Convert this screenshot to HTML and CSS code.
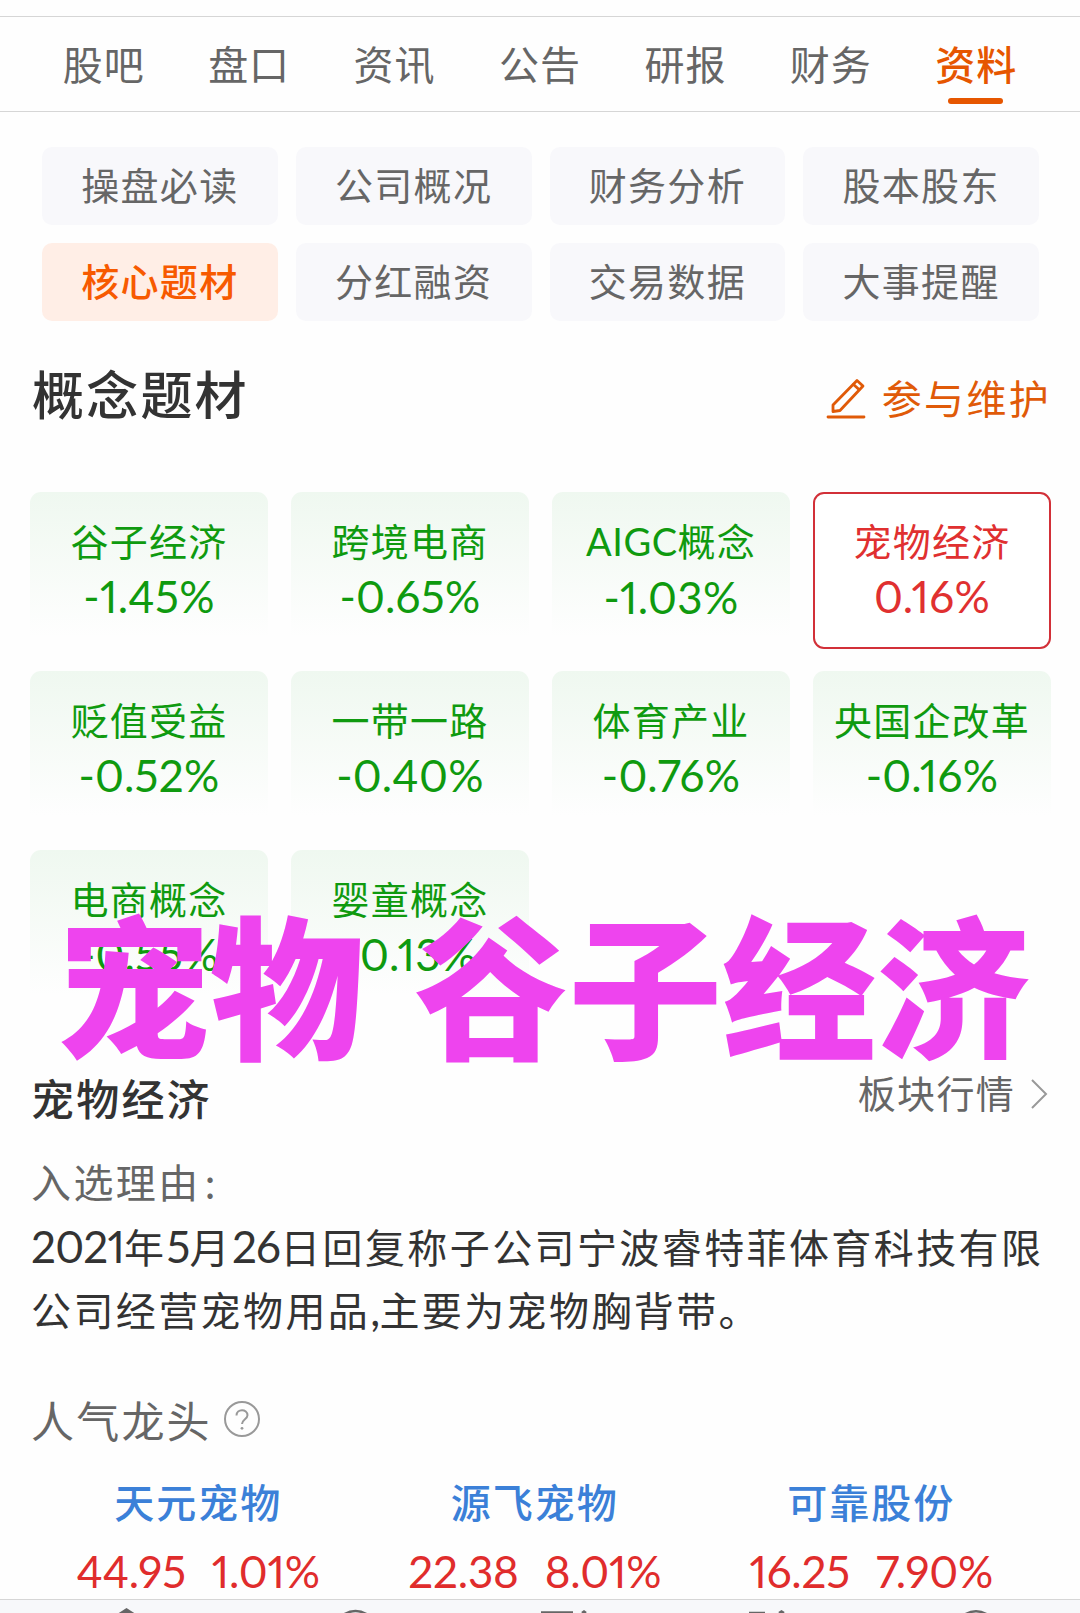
FILE: index.html
```html
<!DOCTYPE html>
<html lang="zh-CN">
<head>
    <meta charset="UTF-8">
    <title>核心题材</title>
    <link rel="stylesheet" href="styles.css">
</head>
<body>

<nav class="tabs">
    <a>股吧</a>
    <a>盘口</a>
    <a>资讯</a>
    <a>公告</a>
    <a>研报</a>
    <a>财务</a>
    <a class="active">资料</a>
</nav>

<div class="chips">
    <a>操盘必读</a>
    <a>公司概况</a>
    <a>财务分析</a>
    <a>股本股东</a>
    <a class="active">核心题材</a>
    <a>分红融资</a>
    <a>交易数据</a>
    <a>大事提醒</a>
</div>

<section class="concepts">
    <header class="head">
        <h1>概念题材</h1>
        <a class="edit">
            <svg width="40" height="42" viewBox="0 0 40 42" fill="none" stroke="currentColor" stroke-width="2.8" stroke-linejoin="round" stroke-linecap="round">
                <path d="M7 27L31 2.5L37 8L14 32.5L7 33.5Z"/>
                <path d="M27.5 6.5L33 11.5"/>
                <path d="M2 39H38"/>
            </svg>
            <span>参与维护</span>
        </a>
    </header>

    <div class="cards">
        <div class="card"><p>谷子经济</p><b>-1.45%</b></div>
        <div class="card"><p>跨境电商</p><b>-0.65%</b></div>
        <div class="card"><p><i>AIGC</i>概念</p><b>-1.03%</b></div>
        <div class="card selected"><p>宠物经济</p><b>0.16%</b></div>
        <div class="card"><p>贬值受益</p><b>-0.52%</b></div>
        <div class="card"><p>一带一路</p><b>-0.40%</b></div>
        <div class="card"><p>体育产业</p><b>-0.76%</b></div>
        <div class="card"><p>央国企改革</p><b>-0.16%</b></div>
        <div class="card"><p>电商概念</p><b>-0.55%</b></div>
        <div class="card"><p>婴童概念</p><b>-0.13%</b></div>
    </div>

    <div class="caption">宠物 谷子经济</div>
</section>

<section class="detail">
    <header class="head">
        <h2>宠物经济</h2>
        <a class="more">
            <span>板块行情</span>
            <svg width="17" height="30" viewBox="0 0 17 30" fill="none" stroke="#999" stroke-width="2">
                <path d="M1 1L15 15L1 29"/>
            </svg>
        </a>
    </header>

    <p class="label">入选理由<span class="colon">:</span></p>
    <p class="reason"><i>2021</i>年<i>5</i>月<i>26</i>日回复称子公司宁波睿特菲体育科技有限<br>公司经营宠物用品<i>,</i>主要为宠物胸背带。</p>

    <h3>人气龙头
        <svg width="38" height="38" viewBox="0 0 38 38" fill="none" stroke="#999" stroke-width="2">
            <circle cx="19" cy="19" r="17"/>
            <path d="M13.5 15.5C13.5 8.5 24.5 8.5 24.5 15.3C24.5 19 19 19.5 19 24"/>
            <circle cx="19" cy="28.3" r="1.4" fill="#999" stroke="none"/>
        </svg>
    </h3>

    <div class="stocks">
        <div class="stock"><p>天元宠物</p><b>44.95</b><b>1.01%</b></div>
        <div class="stock"><p>源飞宠物</p><b>22.38</b><b>8.01%</b></div>
        <div class="stock"><p>可靠股份</p><b>16.25</b><b>7.90%</b></div>
    </div>
</section>

<footer class="toolbar">
    <svg width="1080" height="13" viewBox="0 0 1080 13" fill="none" stroke="#666" stroke-width="2.5">
        <path d="M118 13.5L126.5 8L135 13.5Z" fill="#666" stroke="none"/>
        <path d="M343 15Q355.5 7 368 15"/>
        <path d="M541 12.5H573M582 13L584 11.5L586 13"/>
        <path d="M749 13H765M779 13L781.5 11.5L784 13"/>
        <path d="M964 15Q976 7.5 988 15"/>
    </svg>
</footer>

</body>
</html>
```

FILE: styles.css
```css
body {
    background: #fefefe;
    color: #333;
    font-family: "Noto Sans CJK SC", sans-serif;
    height: 1613px;
    margin: 0;
    overflow: hidden;
    padding-top: 16px;
    box-sizing: border-box;
    display: flex;
    flex-direction: column;
}
h1, h2, h3, p {
    font-weight: normal;
    margin: 0;
}
b, i {
    font-family: Lato, "Noto Sans CJK SC", sans-serif;
    font-style: normal;
    font-variant-numeric: proportional-nums;
    font-weight: normal;
}
svg {
    display: block;
}
.tabs {
    border-bottom: 1px solid #d6d6d6;
    border-top: 1px solid #d6d6d6;
    box-sizing: border-box;
    display: flex;
    flex-shrink: 0;
    height: 96px;
    padding: 0 31px;
}
.tabs a {
    color: #666;
    flex: 1;
    font-size: 40px;
    letter-spacing: 1px;
    line-height: 92px;
    text-align: center;
}
.tabs .active {
    color: #e65600;
    font-weight: 500;
    position: relative;
}
.tabs .active::after {
    background: #e65600;
    border-radius: 3px;
    bottom: 7px;
    content: "";
    height: 6px;
    left: 44px;
    position: absolute;
    width: 55px;
}
.chips {
    display: grid;
    flex-shrink: 0;
    gap: 18px;
    grid-template-columns: repeat(4, 1fr);
    padding: 35px 41px 0 42px;
}
.chips a {
    background: #f8f8fb;
    border-radius: 10px;
    color: #666;
    font-size: 38px;
    height: 78px;
    letter-spacing: 1.3px;
    line-height: 73px;
    text-align: center;
}
.chips .active {
    background: #ffeee6;
    color: #f75a00;
    font-weight: 500;
}
.head {
    align-items: center;
    display: flex;
    justify-content: space-between;
}
.concepts {
    flex-shrink: 0;
    padding: 0 29px 0 30px;
    position: relative;
}
.concepts .head {
    height: 171px;
    padding-left: 2px;
}
h1 {
    font-size: 52px;
    font-weight: 500;
    letter-spacing: 2.2px;
    line-height: 60px;
    margin-bottom: 28px;
}
.edit {
    align-items: center;
    color: #e05a08;
    display: flex;
    font-size: 40px;
    gap: 16px;
    letter-spacing: 2.3px;
    line-height: 50px;
    margin-bottom: 20px;
}
.edit svg {
    margin-top: 4px;
}
.cards {
    display: grid;
    gap: 22px 23px;
    grid-template-columns: repeat(4, 1fr);
}
.card {
    background: linear-gradient(#eff8f0, #fefefe 92%);
    border-radius: 11px;
    box-sizing: border-box;
    color: #0f9a0f;
    height: 157px;
    padding-top: 20px;
    text-align: center;
}
.card p {
    font-size: 38px;
    letter-spacing: 1.2px;
    line-height: 56px;
    white-space: nowrap;
}
.card i {
    letter-spacing: 0.5px;
}
.card b {
    display: block;
    font-size: 44px;
    letter-spacing: 0.3px;
    line-height: 57px;
}
.card.selected {
    background: #fff;
    border: 2px solid #d23038;
    color: #e03030;
    padding-top: 18px;
}
/* caption lies over the last row of cards */
.caption {
    color: #ee44ee;
    font-size: 154px;
    font-weight: 900;
    left: 56px;
    line-height: 154px;
    position: absolute;
    top: 583px;
    white-space: nowrap;
    word-spacing: 15px;
}
.detail {
    box-sizing: border-box;
    flex: 1 1 0;
    min-height: 0;
    padding: 59px 31px 0;
}
.detail .head {
    height: 62px;
}
h2 {
    font-size: 43px;
    font-weight: 500;
    letter-spacing: 2.2px;
}
.more {
    align-items: center;
    color: #666;
    display: flex;
    font-size: 38px;
    gap: 16px;
    letter-spacing: 1.3px;
    margin: 0 1px 11px 0;
}
.more svg {
    margin-top: 4px;
}
.label {
    color: #666;
    font-size: 40px;
    letter-spacing: 2.4px;
    line-height: 60px;
    margin-top: 23px;
}
.colon {
    margin-left: 4px;
}
.reason {
    font-size: 40px;
    letter-spacing: 2.4px;
    line-height: 63px;
    margin-top: 4px;
    white-space: nowrap;
}
.reason i {
    font-size: 44px;
    letter-spacing: -0.8px;
    line-height: 1;
}
h3 {
    align-items: center;
    color: #666;
    display: flex;
    font-size: 43px;
    gap: 11px;
    letter-spacing: 2.2px;
    line-height: 60px;
    margin-top: 48px;
}
.stocks {
    display: grid;
    grid-template-columns: repeat(3, 336.5px);
    margin: 20px 0 0 -1px;
}
.stock {
    text-align: center;
    white-space: nowrap;
}
.stock p {
    color: #3b80d8;
    font-size: 40px;
    font-weight: 500;
    letter-spacing: 2px;
    line-height: 64px;
}
.stock b {
    color: #e02c2c;
    font-size: 44px;
    letter-spacing: -0.2px;
    line-height: 76px;
}
.stock b + b {
    margin-left: 26px;
}
.toolbar {
    background: #f7f8fa;
    border-top: 1px solid #d6d6d6;
    flex-shrink: 0;
    height: 13px;
    overflow: hidden;
    position: relative;
}
```
